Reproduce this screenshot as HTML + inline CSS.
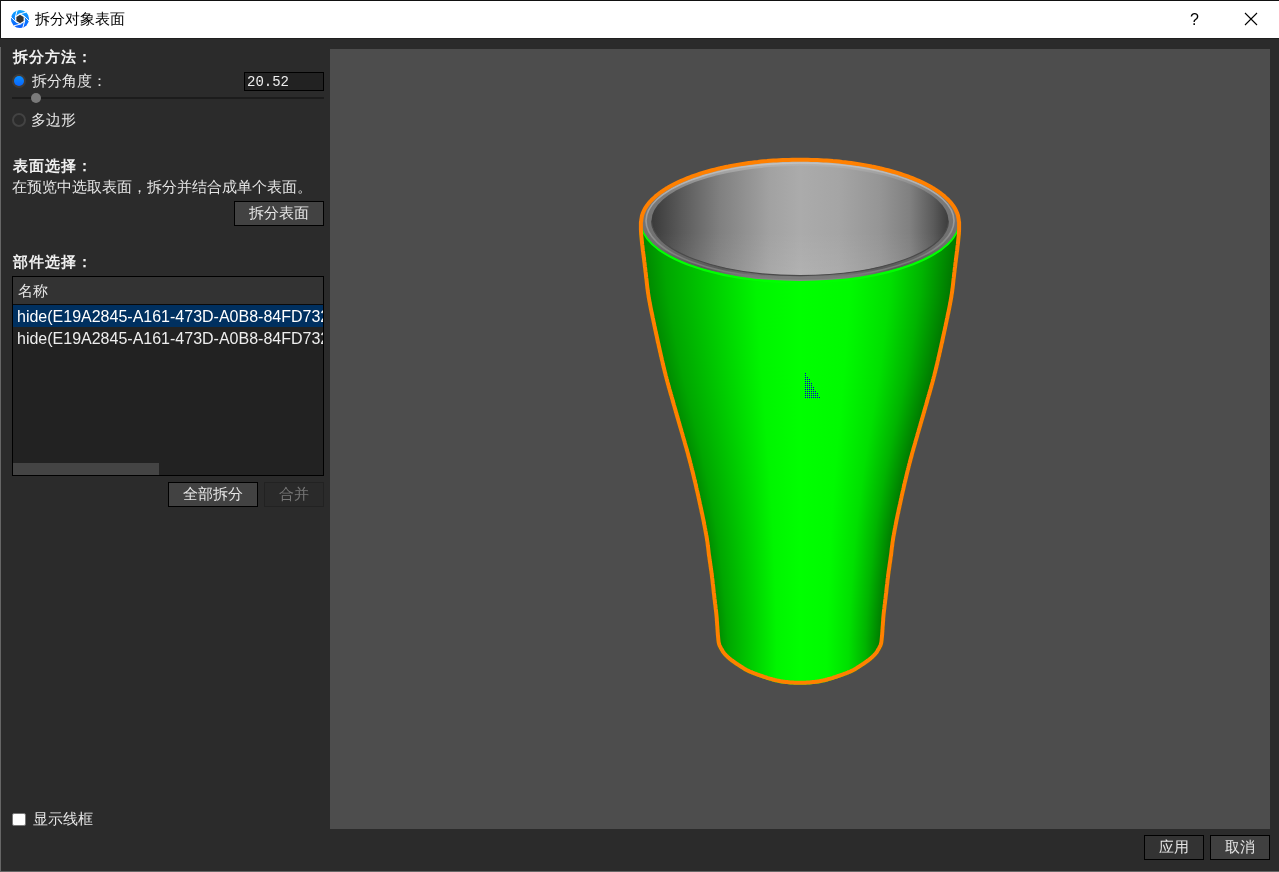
<!DOCTYPE html>
<html><head><meta charset="utf-8">
<style>
*{margin:0;padding:0;box-sizing:border-box}
html,body{width:1279px;height:872px;overflow:hidden;background:#2b2b2b;font-family:"Liberation Sans",sans-serif;color:#e6e6e6}
.a{position:absolute;white-space:nowrap}
.t{font-size:15px;line-height:20px}
.b{font-weight:bold;font-size:15px;letter-spacing:1px}
.btn{position:absolute;border:1px solid #000;background:#424242;color:#e6e6e6;font-size:15px;text-align:center}
</style></head><body>
<div id="root" style="position:absolute;left:0;top:0;width:1279px;height:872px;will-change:transform;background:#2b2b2b">
<!-- title bar -->
<div class="a" style="left:0;top:0;width:1279px;height:38px;background:#fff;border-top:1px solid #111"></div>
<div class="a" style="left:0;top:0;width:1px;height:38px;background:#151515"></div>
<div class="a" style="left:0;top:38px;width:1279px;height:1px;background:#1f1f1f"></div>
<div class="a" style="left:0;top:47px;width:1px;height:825px;background:#666"></div>
<div class="a" style="left:0;top:871px;width:1279px;height:1px;background:#666"></div>
<svg class="a" style="left:10px;top:9px" width="20" height="20" viewBox="0 0 20 20">
<defs><linearGradient id="ic" x1="0" y1="0" x2="0" y2="1"><stop offset="0" stop-color="#10a8ff"/><stop offset="1" stop-color="#0a5cff"/></linearGradient></defs>
<circle cx="10" cy="10" r="9.1" fill="url(#ic)"/>
<circle cx="10" cy="10" r="5.0" fill="#fff"/>
<path d="M14.83 11.29L12.77 18.98 M11.29 14.83L3.61 16.89 M6.46 13.54L0.84 7.91 M5.17 8.71L7.23 1.02 M8.71 5.17L16.39 3.11 M13.54 6.46L19.16 12.09" stroke="#fff" stroke-width="1"/>
<polygon points="13.64,12.10 10.00,14.20 6.36,12.10 6.36,7.90 10.00,5.80 13.64,7.90" fill="#333"/>
</svg>
<div class="a t" style="left:35px;top:9px;color:#000">拆分对象表面</div>
<div class="a" style="left:1190px;top:10px;color:#000;font-size:16px;line-height:20px">?</div>
<svg class="a" style="left:1244px;top:12px" width="14" height="14"><path d="M1 1L13 13M13 1L1 13" stroke="#000" stroke-width="1.1"/></svg>

<!-- left panel -->
<div class="a t b" style="left:13px;top:47px;color:#f0f0f0">拆分方法：</div>
<div class="a" style="left:12px;top:74px;width:14px;height:14px;border-radius:50%;background:#3e3a36"></div>
<div class="a" style="left:14px;top:76px;width:10px;height:10px;border-radius:50%;background:linear-gradient(#0a90ff,#0a64ff)"></div>
<div class="a t" style="left:32px;top:71px">拆分角度：</div>
<div class="a" style="left:244px;top:72px;width:80px;height:19px;border:1px solid #000;background:#222"></div>
<div class="a" style="left:247px;top:74px;font-family:'Liberation Mono',monospace;font-size:14px;line-height:17px;color:#eee">20.52</div>
<div class="a" style="left:12px;top:97px;width:312px;height:2px;background:#1c1c1c"></div>
<div class="a" style="left:31px;top:93px;width:10px;height:10px;border-radius:50%;background:#7a7a7a"></div>
<div class="a" style="left:12px;top:113px;width:14px;height:14px;border-radius:50%;border:2px solid #434343"></div>
<div class="a t" style="left:31px;top:110px">多边形</div>

<div class="a t b" style="left:13px;top:156px;color:#f0f0f0">表面选择：</div>
<div class="a t" style="left:12px;top:177px">在预览中选取表面，拆分并结合成单个表面。</div>
<div class="btn" style="left:234px;top:201px;width:90px;height:25px;line-height:22px">拆分表面</div>

<div class="a t b" style="left:13px;top:252px;color:#f0f0f0">部件选择：</div>
<div class="a" style="left:12px;top:276px;width:312px;height:200px;border:1px solid #000;background:#222;overflow:hidden">
  <div style="position:absolute;left:0;top:0;width:310px;height:28px;background:#333;border-bottom:1px solid #0a0a0a"></div>
  <div class="a t" style="left:5px;top:4px">名称</div>
  <div style="position:absolute;left:0;top:28px;width:310px;height:22px;background:#003060"></div>
  <div class="a" style="left:4px;top:30px;font-size:16px;line-height:20px;color:#fff">hide(E19A2845-A161-473D-A0B8-84FD732E</div>
  <div class="a" style="left:4px;top:52px;font-size:16px;line-height:20px;color:#eee">hide(E19A2845-A161-473D-A0B8-84FD732E</div>
  <div style="position:absolute;left:0;top:186px;width:146px;height:12px;background:#444"></div>
</div>
<div class="btn" style="left:168px;top:482px;width:90px;height:25px;line-height:22px">全部拆分</div>
<div class="btn" style="left:264px;top:482px;width:60px;height:25px;line-height:22px;background:#2a2a2a;border-color:#222;color:#777">合并</div>

<div class="a" style="left:12px;top:813px;width:14px;height:13px;background:#fff;border:1px solid #777;border-radius:2px"></div>
<div class="a t" style="left:33px;top:809px">显示线框</div>

<!-- viewport -->
<div class="a" style="left:330px;top:49px;width:940px;height:780px;background:#4d4d4d"></div>
<svg width="1279" height="872" style="position:absolute;left:0;top:0">
<defs>
<linearGradient id="gg">
<stop offset="0" stop-color="#008400"/><stop offset="0.07" stop-color="#00a600"/><stop offset="0.21" stop-color="#00cc00"/><stop offset="0.36" stop-color="#00f500"/><stop offset="0.5" stop-color="#00ff00"/><stop offset="0.66" stop-color="#00fa00"/><stop offset="0.79" stop-color="#00e000"/><stop offset="0.89" stop-color="#00b400"/><stop offset="1" stop-color="#007000"/>
</linearGradient>
<linearGradient id="ig" gradientUnits="userSpaceOnUse" x1="651.5" y1="0" x2="948.5" y2="0">
<stop offset="0" stop-color="#3a3a3a"/><stop offset="0.1" stop-color="#5a5a5a"/><stop offset="0.23" stop-color="#808080"/><stop offset="0.4" stop-color="#a2a2a2"/><stop offset="0.5" stop-color="#ababab"/><stop offset="0.63" stop-color="#a5a5a5"/><stop offset="0.77" stop-color="#959595"/><stop offset="0.87" stop-color="#808080"/><stop offset="0.95" stop-color="#5a5a5a"/><stop offset="1" stop-color="#3c3c3c"/>
</linearGradient>
<linearGradient id="rg" gradientUnits="userSpaceOnUse" x1="0" y1="160" x2="0" y2="281">
<stop offset="0" stop-color="#b8b8b8"/><stop offset="0.3" stop-color="#7a7a7a"/><stop offset="0.7" stop-color="#6e6e6e"/><stop offset="0.9" stop-color="#5a5a5a"/><stop offset="1" stop-color="#8a8a8a"/>
</linearGradient>
<linearGradient id="hg" gradientUnits="userSpaceOnUse" x1="0" y1="163" x2="0" y2="279">
<stop offset="0" stop-color="#c0c0c0"/><stop offset="0.5" stop-color="#9a9a9a"/><stop offset="0.85" stop-color="#7a7a7a"/><stop offset="1" stop-color="#7a7a7a"/>
</linearGradient>
<linearGradient id="ivg" gradientUnits="userSpaceOnUse" x1="0" y1="166" x2="0" y2="276">
<stop offset="0" stop-color="#000" stop-opacity="0"/><stop offset="0.6" stop-color="#fff" stop-opacity="0"/><stop offset="1" stop-color="#fff" stop-opacity="0.08"/>
</linearGradient>
<clipPath id="bc"><polygon points="638.9,222.0 638.9,223.0 638.9,224.0 638.9,225.0 638.9,226.0 638.9,227.0 638.9,228.0 638.9,229.0 638.9,230.0 639.0,231.0 639.0,232.0 639.1,233.0 639.1,234.0 639.2,235.0 639.3,236.0 639.4,237.0 639.5,238.0 639.6,239.0 639.7,240.0 639.8,241.0 639.9,242.0 640.0,243.0 640.1,244.0 640.3,245.0 640.4,246.0 640.5,247.0 640.6,248.0 640.7,249.0 640.8,250.0 641.0,251.0 641.1,252.0 641.2,253.0 641.3,254.0 641.5,255.0 641.6,256.0 641.7,257.0 641.8,258.0 642.0,259.0 642.1,260.0 642.2,261.0 642.4,262.0 642.5,263.0 642.6,264.0 642.7,265.0 642.8,266.0 643.0,267.0 643.1,268.0 643.2,269.0 643.3,270.0 643.4,271.0 643.5,272.0 643.7,273.0 643.8,274.0 643.9,275.0 644.0,276.0 644.1,277.0 644.3,278.0 644.4,279.0 644.5,280.0 644.6,281.0 644.7,282.0 644.8,282.9 644.9,283.8 645.0,284.8 645.1,285.7 645.2,286.6 645.3,287.6 645.5,288.5 645.6,289.5 645.7,290.5 645.8,291.5 646.0,292.6 646.1,293.7 646.3,294.8 646.5,296.0 646.6,296.8 646.8,297.6 646.9,298.4 647.1,299.3 647.2,300.1 647.4,301.0 647.5,301.9 647.7,302.9 647.9,303.8 648.1,304.7 648.3,305.7 648.5,306.7 648.6,307.7 648.8,308.7 649.0,309.7 649.3,310.7 649.5,311.8 649.7,312.8 649.9,313.8 650.1,314.9 650.3,315.9 650.5,317.0 650.8,318.1 651.0,319.2 651.2,320.2 651.4,321.3 651.7,322.4 651.9,323.4 652.1,324.5 652.4,325.6 652.6,326.7 652.8,327.7 653.0,328.8 653.3,329.8 653.5,330.9 653.7,331.9 653.9,333.0 654.2,334.0 654.4,335.0 654.6,336.0 654.8,337.0 655.0,338.0 655.2,338.9 655.5,339.9 655.7,340.9 655.9,341.9 656.1,342.9 656.3,343.9 656.5,344.9 656.7,345.8 657.0,346.8 657.2,347.8 657.4,348.8 657.6,349.8 657.8,350.8 658.1,351.8 658.3,352.8 658.5,353.8 658.7,354.7 659.0,355.7 659.2,356.7 659.4,357.7 659.6,358.7 659.9,359.7 660.1,360.6 660.3,361.6 660.5,362.6 660.8,363.6 661.0,364.5 661.2,365.5 661.5,366.5 661.7,367.5 661.9,368.4 662.2,369.4 662.4,370.3 662.6,371.3 662.9,372.2 663.1,373.2 663.3,374.1 663.6,375.1 663.8,376.0 664.1,377.0 664.3,378.0 664.6,379.0 664.8,380.0 665.1,380.9 665.3,381.9 665.6,382.8 665.9,383.8 666.1,384.7 666.4,385.7 666.6,386.6 666.9,387.5 667.1,388.4 667.4,389.4 667.7,390.3 667.9,391.2 668.2,392.1 668.5,393.1 668.7,394.0 669.0,394.9 669.3,395.9 669.5,396.8 669.8,397.7 670.1,398.7 670.4,399.7 670.6,400.7 670.9,401.6 671.2,402.6 671.5,403.6 671.8,404.7 672.1,405.7 672.4,406.8 672.7,407.8 673.0,408.9 673.3,410.0 673.5,410.8 673.8,411.7 674.0,412.5 674.3,413.4 674.5,414.3 674.8,415.1 675.0,416.0 675.3,416.9 675.5,417.8 675.8,418.7 676.0,419.6 676.3,420.5 676.6,421.4 676.8,422.3 677.1,423.3 677.4,424.2 677.6,425.1 677.9,426.1 678.2,427.0 678.5,428.0 678.8,428.9 679.0,429.9 679.3,430.9 679.6,431.8 679.9,432.8 680.2,433.8 680.4,434.8 680.7,435.8 681.0,436.7 681.3,437.7 681.6,438.7 681.9,439.7 682.2,440.7 682.5,441.7 682.7,442.7 683.0,443.7 683.3,444.7 683.6,445.8 683.9,446.8 684.2,447.8 684.5,448.8 684.7,449.8 685.0,450.8 685.3,451.8 685.6,452.8 685.9,453.9 686.1,454.9 686.4,455.9 686.7,456.9 687.0,457.9 687.2,458.9 687.5,459.9 687.8,461.0 688.0,462.0 688.3,463.0 688.6,464.0 688.8,465.0 689.1,466.0 689.3,467.0 689.6,468.0 689.9,469.0 690.1,470.0 690.3,471.0 690.6,471.9 690.8,472.9 691.1,473.9 691.3,474.9 691.5,475.9 691.8,476.9 692.0,478.0 692.3,479.0 692.5,480.0 692.8,481.1 693.0,482.1 693.3,483.2 693.5,484.2 693.8,485.3 694.0,486.3 694.2,487.4 694.5,488.5 694.7,489.5 695.0,490.6 695.2,491.7 695.5,492.8 695.7,493.9 696.0,494.9 696.2,496.0 696.4,497.1 696.7,498.2 696.9,499.3 697.2,500.3 697.4,501.4 697.6,502.5 697.9,503.6 698.1,504.6 698.3,505.7 698.6,506.7 698.8,507.8 699.0,508.8 699.2,509.9 699.4,510.9 699.7,512.0 699.9,513.0 700.1,514.0 700.3,515.0 700.5,516.0 700.7,517.0 700.9,518.0 701.1,519.0 701.3,519.9 701.5,520.9 701.7,521.9 701.9,522.8 702.1,523.7 702.3,524.6 702.4,525.5 702.6,526.4 702.8,527.3 703.0,528.2 703.1,529.0 703.3,529.9 703.4,530.7 703.6,531.5 703.7,532.3 703.9,533.1 704.0,533.8 704.1,534.6 704.3,535.3 704.4,536.0 704.6,537.3 704.8,538.5 705.0,539.6 705.2,540.7 705.3,541.8 705.5,542.8 705.6,543.8 705.7,544.8 705.9,545.8 706.0,546.7 706.1,547.6 706.2,548.5 706.3,549.5 706.4,550.4 706.5,551.3 706.6,552.2 706.7,553.1 706.8,554.1 707.0,555.0 707.1,556.0 707.2,557.0 707.4,558.0 707.5,559.0 707.7,560.0 707.8,561.0 707.9,562.0 708.1,563.0 708.2,564.0 708.4,565.0 708.5,566.0 708.7,567.0 708.8,568.0 709.0,569.0 709.1,570.0 709.2,571.0 709.4,572.0 709.5,573.0 709.6,574.0 709.8,575.0 709.9,576.0 710.0,577.0 710.2,578.0 710.3,579.0 710.4,580.0 710.5,581.0 710.6,582.0 710.7,583.0 710.9,584.0 711.0,585.0 711.1,586.0 711.2,587.0 711.3,588.0 711.4,589.0 711.5,590.0 711.6,591.0 711.7,592.0 711.9,593.0 712.0,594.0 712.1,595.0 712.2,596.0 712.3,597.0 712.4,598.0 712.6,599.0 712.7,600.0 712.8,601.0 712.9,602.0 713.0,603.0 713.2,604.0 713.3,605.0 713.4,606.0 713.5,607.0 713.6,608.0 713.8,609.0 713.9,610.0 714.0,611.0 714.1,612.0 714.2,613.0 714.3,614.0 714.4,615.0 714.5,616.0 714.6,617.0 714.7,618.0 714.8,619.1 714.8,620.1 714.9,621.2 715.0,622.3 715.1,623.4 715.2,624.4 715.2,625.5 715.3,626.6 715.4,627.6 715.4,628.6 715.5,629.7 715.6,630.7 715.6,631.6 715.7,632.6 715.8,633.5 715.8,634.4 715.9,635.2 716.0,636.0 716.1,637.2 716.2,638.3 716.3,639.4 716.4,640.4 716.5,641.4 716.7,642.3 716.8,643.2 717.0,644.0 717.3,645.1 717.7,646.1 718.1,647.0 718.6,648.0 719.0,648.9 719.5,649.8 720.1,650.7 720.6,651.7 721.3,652.7 721.9,653.6 722.6,654.5 723.3,655.3 724.0,656.1 724.7,656.8 725.5,657.6 726.3,658.3 727.1,659.1 727.9,659.8 728.8,660.5 729.6,661.1 730.4,661.7 731.2,662.4 732.0,663.0 732.8,663.6 733.7,664.2 734.6,664.7 735.4,665.3 736.3,665.9 737.2,666.5 738.1,667.1 738.9,667.6 739.8,668.2 740.6,668.7 741.5,669.3 742.4,669.9 743.3,670.4 744.2,670.9 745.2,671.5 746.2,672.0 747.2,672.5 748.0,672.9 748.9,673.3 749.8,673.7 750.7,674.1 751.7,674.5 752.7,674.9 753.6,675.2 754.6,675.6 755.6,676.0 756.6,676.3 757.6,676.7 758.6,677.1 759.6,677.4 760.6,677.7 761.6,678.1 762.6,678.4 763.5,678.7 764.5,679.0 765.5,679.3 766.5,679.7 767.4,680.0 768.4,680.3 769.4,680.6 770.4,680.9 771.3,681.1 772.3,681.4 773.3,681.7 774.2,681.9 775.2,682.2 776.1,682.4 777.1,682.6 778.0,682.8 779.0,683.0 780.1,683.2 781.1,683.4 782.1,683.5 783.1,683.7 784.1,683.8 785.1,683.9 786.1,684.0 787.1,684.1 788.1,684.2 789.0,684.3 790.0,684.4 791.0,684.5 792.1,684.6 793.1,684.6 794.1,684.7 795.1,684.7 796.0,684.7 797.0,684.8 798.0,684.8 799.0,684.8 800.0,684.8 801.0,684.8 802.0,684.8 803.0,684.8 804.0,684.7 804.9,684.7 805.9,684.7 806.9,684.6 807.9,684.6 809.0,684.5 810.0,684.4 811.0,684.3 811.9,684.2 812.9,684.1 813.9,684.0 814.9,683.9 815.9,683.8 816.9,683.7 817.9,683.5 818.9,683.4 819.9,683.2 821.0,683.0 822.0,682.8 822.9,682.6 823.9,682.4 824.8,682.2 825.8,681.9 826.7,681.7 827.7,681.4 828.7,681.1 829.6,680.9 830.6,680.6 831.6,680.3 832.6,680.0 833.5,679.7 834.5,679.3 835.5,679.0 836.5,678.7 837.4,678.4 838.4,678.1 839.4,677.7 840.4,677.4 841.4,677.1 842.4,676.7 843.4,676.3 844.4,676.0 845.4,675.6 846.4,675.2 847.3,674.9 848.3,674.5 849.3,674.1 850.2,673.7 851.1,673.3 852.0,672.9 852.8,672.5 853.8,672.0 854.8,671.5 855.8,670.9 856.7,670.4 857.6,669.9 858.5,669.3 859.4,668.7 860.2,668.2 861.1,667.6 861.9,667.1 862.8,666.5 863.7,665.9 864.6,665.3 865.4,664.7 866.3,664.2 867.2,663.6 868.0,663.0 868.8,662.4 869.6,661.7 870.4,661.1 871.2,660.5 872.1,659.8 872.9,659.1 873.7,658.3 874.5,657.6 875.3,656.8 876.0,656.1 876.7,655.3 877.4,654.5 878.1,653.6 878.7,652.7 879.4,651.7 879.9,650.7 880.5,649.8 881.0,648.9 881.4,648.0 881.9,647.0 882.3,646.1 882.7,645.1 883.0,644.0 883.2,643.2 883.3,642.3 883.5,641.4 883.6,640.4 883.7,639.4 883.8,638.3 883.9,637.2 884.0,636.0 884.1,635.2 884.2,634.4 884.2,633.5 884.3,632.6 884.4,631.6 884.4,630.7 884.5,629.7 884.6,628.6 884.6,627.6 884.7,626.6 884.8,625.5 884.8,624.4 884.9,623.4 885.0,622.3 885.1,621.2 885.2,620.1 885.2,619.1 885.3,618.0 885.4,617.0 885.5,616.0 885.6,615.0 885.7,614.0 885.8,613.0 885.9,612.0 886.0,611.0 886.1,610.0 886.2,609.0 886.4,608.0 886.5,607.0 886.6,606.0 886.7,605.0 886.8,604.0 887.0,603.0 887.1,602.0 887.2,601.0 887.3,600.0 887.4,599.0 887.6,598.0 887.7,597.0 887.8,596.0 887.9,595.0 888.0,594.0 888.1,593.0 888.3,592.0 888.4,591.0 888.5,590.0 888.6,589.0 888.7,588.0 888.8,587.0 888.9,586.0 889.0,585.0 889.1,584.0 889.3,583.0 889.4,582.0 889.5,581.0 889.6,580.0 889.7,579.0 889.8,578.0 890.0,577.0 890.1,576.0 890.2,575.0 890.4,574.0 890.5,573.0 890.6,572.0 890.8,571.0 890.9,570.0 891.0,569.0 891.2,568.0 891.3,567.0 891.5,566.0 891.6,565.0 891.8,564.0 891.9,563.0 892.1,562.0 892.2,561.0 892.3,560.0 892.5,559.0 892.6,558.0 892.8,557.0 892.9,556.0 893.0,555.0 893.2,554.1 893.3,553.1 893.4,552.2 893.5,551.3 893.6,550.4 893.7,549.5 893.8,548.5 893.9,547.6 894.0,546.7 894.1,545.8 894.3,544.8 894.4,543.8 894.5,542.8 894.7,541.8 894.8,540.7 895.0,539.6 895.2,538.5 895.4,537.3 895.6,536.0 895.7,535.3 895.9,534.6 896.0,533.8 896.1,533.1 896.3,532.3 896.4,531.5 896.6,530.7 896.7,529.9 896.9,529.0 897.0,528.2 897.2,527.3 897.4,526.4 897.6,525.5 897.7,524.6 897.9,523.7 898.1,522.8 898.3,521.9 898.5,520.9 898.7,519.9 898.9,519.0 899.1,518.0 899.3,517.0 899.5,516.0 899.7,515.0 899.9,514.0 900.1,513.0 900.3,512.0 900.6,510.9 900.8,509.9 901.0,508.8 901.2,507.8 901.4,506.7 901.7,505.7 901.9,504.6 902.1,503.6 902.4,502.5 902.6,501.4 902.8,500.3 903.1,499.3 903.3,498.2 903.6,497.1 903.8,496.0 904.0,494.9 904.3,493.9 904.5,492.8 904.8,491.7 905.0,490.6 905.3,489.5 905.5,488.5 905.8,487.4 906.0,486.3 906.2,485.3 906.5,484.2 906.7,483.2 907.0,482.1 907.2,481.1 907.5,480.0 907.7,479.0 908.0,478.0 908.2,476.9 908.5,475.9 908.7,474.9 908.9,473.9 909.2,472.9 909.4,471.9 909.7,471.0 909.9,470.0 910.1,469.0 910.4,468.0 910.7,467.0 910.9,466.0 911.2,465.0 911.4,464.0 911.7,463.0 912.0,462.0 912.2,461.0 912.5,459.9 912.8,458.9 913.0,457.9 913.3,456.9 913.6,455.9 913.9,454.9 914.1,453.9 914.4,452.8 914.7,451.8 915.0,450.8 915.3,449.8 915.5,448.8 915.8,447.8 916.1,446.8 916.4,445.8 916.7,444.7 917.0,443.7 917.3,442.7 917.5,441.7 917.8,440.7 918.1,439.7 918.4,438.7 918.7,437.7 919.0,436.7 919.3,435.8 919.6,434.8 919.8,433.8 920.1,432.8 920.4,431.8 920.7,430.9 921.0,429.9 921.2,428.9 921.5,428.0 921.8,427.0 922.1,426.1 922.4,425.1 922.6,424.2 922.9,423.3 923.2,422.3 923.4,421.4 923.7,420.5 924.0,419.6 924.2,418.7 924.5,417.8 924.7,416.9 925.0,416.0 925.2,415.1 925.5,414.3 925.7,413.4 926.0,412.5 926.2,411.7 926.5,410.8 926.7,410.0 927.0,408.9 927.3,407.8 927.6,406.8 927.9,405.7 928.2,404.7 928.5,403.6 928.8,402.6 929.1,401.6 929.4,400.7 929.6,399.7 929.9,398.7 930.2,397.7 930.5,396.8 930.7,395.9 931.0,394.9 931.3,394.0 931.5,393.1 931.8,392.1 932.1,391.2 932.3,390.3 932.6,389.4 932.9,388.4 933.1,387.5 933.4,386.6 933.6,385.7 933.9,384.7 934.1,383.8 934.4,382.8 934.7,381.9 934.9,380.9 935.2,380.0 935.4,379.0 935.7,378.0 935.9,377.0 936.2,376.0 936.4,375.1 936.7,374.1 936.9,373.2 937.1,372.2 937.4,371.3 937.6,370.3 937.8,369.4 938.1,368.4 938.3,367.5 938.5,366.5 938.8,365.5 939.0,364.5 939.2,363.6 939.5,362.6 939.7,361.6 939.9,360.6 940.1,359.7 940.4,358.7 940.6,357.7 940.8,356.7 941.0,355.7 941.3,354.7 941.5,353.8 941.7,352.8 941.9,351.8 942.2,350.8 942.4,349.8 942.6,348.8 942.8,347.8 943.0,346.8 943.3,345.8 943.5,344.9 943.7,343.9 943.9,342.9 944.1,341.9 944.3,340.9 944.5,339.9 944.8,338.9 945.0,338.0 945.2,337.0 945.4,336.0 945.6,335.0 945.8,334.0 946.1,333.0 946.3,331.9 946.5,330.9 946.7,329.8 947.0,328.8 947.2,327.7 947.4,326.7 947.6,325.6 947.9,324.5 948.1,323.4 948.3,322.4 948.6,321.3 948.8,320.2 949.0,319.2 949.2,318.1 949.5,317.0 949.7,315.9 949.9,314.9 950.1,313.8 950.3,312.8 950.5,311.8 950.7,310.7 951.0,309.7 951.2,308.7 951.4,307.7 951.5,306.7 951.7,305.7 951.9,304.7 952.1,303.8 952.3,302.9 952.5,301.9 952.6,301.0 952.8,300.1 952.9,299.3 953.1,298.4 953.2,297.6 953.4,296.8 953.5,296.0 953.7,294.8 953.9,293.7 954.0,292.6 954.2,291.5 954.3,290.5 954.4,289.5 954.5,288.5 954.7,287.6 954.8,286.6 954.9,285.7 955.0,284.8 955.1,283.8 955.2,282.9 955.3,282.0 955.4,281.0 955.5,280.0 955.6,279.0 955.7,278.0 955.9,277.0 956.0,276.0 956.1,275.0 956.2,274.0 956.3,273.0 956.5,272.0 956.6,271.0 956.7,270.0 956.8,269.0 956.9,268.0 957.0,267.0 957.2,266.0 957.3,265.0 957.4,264.0 957.5,263.0 957.6,262.0 957.8,261.0 957.9,260.0 958.0,259.0 958.2,258.0 958.3,257.0 958.4,256.0 958.5,255.0 958.7,254.0 958.8,253.0 958.9,252.0 959.0,251.0 959.2,250.0 959.3,249.0 959.4,248.0 959.5,247.0 959.6,246.0 959.7,245.0 959.9,244.0 960.0,243.0 960.1,242.0 960.2,241.0 960.3,240.0 960.4,239.0 960.5,238.0 960.6,237.0 960.7,236.0 960.8,235.0 960.9,234.0 960.9,233.0 961.0,232.0 961.0,231.0 961.1,230.0 961.1,229.0 961.1,228.0 961.1,227.0 961.1,226.0 961.1,225.0 961.1,224.0 961.1,223.0 961.1,222.0 960.8,220.7 960.7,219.5 960.5,218.2 960.3,216.9 960.0,215.7 959.7,214.4 959.3,213.1 958.8,211.9 958.3,210.6 957.7,209.4 957.0,208.1 956.3,206.9 955.5,205.7 954.7,204.4 953.8,203.2 952.8,202.0 951.8,200.8 950.7,199.6 949.6,198.4 948.4,197.2 947.2,196.1 945.8,194.9 944.5,193.8 943.1,192.6 941.6,191.5 940.0,190.4 938.5,189.3 936.8,188.2 935.1,187.1 933.4,186.1 931.6,185.0 929.7,184.0 927.8,183.0 925.9,182.0 923.9,181.0 921.8,180.0 919.7,179.1 917.6,178.1 915.4,177.2 913.1,176.3 910.9,175.4 908.5,174.6 906.2,173.7 903.8,172.9 901.3,172.1 898.8,171.3 896.3,170.5 893.7,169.8 891.1,169.0 888.5,168.3 885.8,167.6 883.1,167.0 880.4,166.3 877.6,165.7 874.8,165.1 872.0,164.5 869.2,164.0 866.3,163.4 863.4,162.9 860.4,162.4 857.5,161.9 854.5,161.5 851.5,161.1 848.5,160.7 845.4,160.3 842.4,160.0 839.3,159.7 836.2,159.4 833.1,159.1 830.0,158.8 826.9,158.6 823.7,158.4 820.6,158.2 817.4,158.1 814.3,158.0 811.1,157.9 807.9,157.8 804.8,157.7 801.6,157.7 798.4,157.7 795.2,157.7 792.1,157.8 788.9,157.9 785.7,158.0 782.6,158.1 779.4,158.2 776.3,158.4 773.1,158.6 770.0,158.8 766.9,159.1 763.8,159.4 760.7,159.7 757.6,160.0 754.6,160.3 751.5,160.7 748.5,161.1 745.5,161.5 742.5,161.9 739.6,162.4 736.6,162.9 733.7,163.4 730.8,164.0 728.0,164.5 725.2,165.1 722.4,165.7 719.6,166.3 716.9,167.0 714.2,167.6 711.5,168.3 708.9,169.0 706.3,169.8 703.7,170.5 701.2,171.3 698.7,172.1 696.2,172.9 693.8,173.7 691.5,174.6 689.1,175.4 686.9,176.3 684.6,177.2 682.4,178.1 680.3,179.1 678.2,180.0 676.1,181.0 674.1,182.0 672.2,183.0 670.3,184.0 668.4,185.0 666.6,186.1 664.9,187.1 663.2,188.2 661.5,189.3 660.0,190.4 658.4,191.5 656.9,192.6 655.5,193.8 654.2,194.9 652.8,196.1 651.6,197.2 650.4,198.4 649.3,199.6 648.2,200.8 647.2,202.0 646.2,203.2 645.3,204.4 644.5,205.7 643.7,206.9 643.0,208.1 642.3,209.4 641.7,210.6 641.2,211.9 640.7,213.1 640.3,214.4 640.0,215.7 639.7,216.9 639.5,218.2 639.3,219.5 639.2,220.7"/></clipPath>
</defs>
<g clip-path="url(#bc)" fill="url(#gg)"><rect x="638.9" y="222" width="322.2" height="1"/><rect x="638.9" y="223" width="322.2" height="1"/><rect x="638.9" y="224" width="322.2" height="1"/><rect x="638.9" y="225" width="322.2" height="1"/><rect x="638.9" y="226" width="322.2" height="1"/><rect x="638.9" y="227" width="322.2" height="1"/><rect x="638.9" y="228" width="322.2" height="1"/><rect x="638.9" y="229" width="322.2" height="1"/><rect x="638.9" y="230" width="322.1" height="1"/><rect x="639.0" y="231" width="322.0" height="1"/><rect x="639.0" y="232" width="321.9" height="1"/><rect x="639.1" y="233" width="321.8" height="1"/><rect x="639.2" y="234" width="321.7" height="1"/><rect x="639.2" y="235" width="321.5" height="1"/><rect x="639.3" y="236" width="321.4" height="1"/><rect x="639.4" y="237" width="321.2" height="1"/><rect x="639.5" y="238" width="321.0" height="1"/><rect x="639.6" y="239" width="320.8" height="1"/><rect x="639.7" y="240" width="320.5" height="1"/><rect x="639.8" y="241" width="320.3" height="1"/><rect x="640.0" y="242" width="320.1" height="1"/><rect x="640.1" y="243" width="319.8" height="1"/><rect x="640.2" y="244" width="319.6" height="1"/><rect x="640.3" y="245" width="319.4" height="1"/><rect x="640.4" y="246" width="319.1" height="1"/><rect x="640.5" y="247" width="318.9" height="1"/><rect x="640.7" y="248" width="318.7" height="1"/><rect x="640.8" y="249" width="318.5" height="1"/><rect x="640.9" y="250" width="318.2" height="1"/><rect x="641.0" y="251" width="318.0" height="1"/><rect x="641.1" y="252" width="317.7" height="1"/><rect x="641.3" y="253" width="317.5" height="1"/><rect x="641.4" y="254" width="317.2" height="1"/><rect x="641.5" y="255" width="317.0" height="1"/><rect x="641.6" y="256" width="316.7" height="1"/><rect x="641.8" y="257" width="316.4" height="1"/><rect x="641.9" y="258" width="316.2" height="1"/><rect x="642.0" y="259" width="315.9" height="1"/><rect x="642.2" y="260" width="315.7" height="1"/><rect x="642.3" y="261" width="315.4" height="1"/><rect x="642.4" y="262" width="315.2" height="1"/><rect x="642.5" y="263" width="314.9" height="1"/><rect x="642.7" y="264" width="314.7" height="1"/><rect x="642.8" y="265" width="314.4" height="1"/><rect x="642.9" y="266" width="314.2" height="1"/><rect x="643.0" y="267" width="314.0" height="1"/><rect x="643.1" y="268" width="313.7" height="1"/><rect x="643.3" y="269" width="313.5" height="1"/><rect x="643.4" y="270" width="313.3" height="1"/><rect x="643.5" y="271" width="313.0" height="1"/><rect x="643.6" y="272" width="312.8" height="1"/><rect x="643.7" y="273" width="312.5" height="1"/><rect x="643.8" y="274" width="312.3" height="1"/><rect x="644.0" y="275" width="312.1" height="1"/><rect x="644.1" y="276" width="311.8" height="1"/><rect x="644.2" y="277" width="311.6" height="1"/><rect x="644.3" y="278" width="311.4" height="1"/><rect x="644.4" y="279" width="311.1" height="1"/><rect x="644.6" y="280" width="310.9" height="1"/><rect x="644.7" y="281" width="310.6" height="1"/><rect x="644.8" y="282" width="310.4" height="1"/><rect x="644.9" y="283" width="310.2" height="1"/><rect x="645.0" y="284" width="310.0" height="1"/><rect x="645.1" y="285" width="309.8" height="1"/><rect x="645.2" y="286" width="309.5" height="1"/><rect x="645.3" y="287" width="309.3" height="1"/><rect x="645.5" y="288" width="309.1" height="1"/><rect x="645.6" y="289" width="308.9" height="1"/><rect x="645.7" y="290" width="308.6" height="1"/><rect x="645.8" y="291" width="308.3" height="1"/><rect x="646.0" y="292" width="308.1" height="1"/><rect x="646.1" y="293" width="307.8" height="1"/><rect x="646.3" y="294" width="307.5" height="1"/><rect x="646.4" y="295" width="307.2" height="1"/><rect x="646.6" y="296" width="306.8" height="1"/><rect x="646.8" y="297" width="306.5" height="1"/><rect x="646.9" y="298" width="306.2" height="1"/><rect x="647.1" y="299" width="305.8" height="1"/><rect x="647.3" y="300" width="305.4" height="1"/><rect x="647.5" y="301" width="305.1" height="1"/><rect x="647.6" y="302" width="304.7" height="1"/><rect x="647.8" y="303" width="304.3" height="1"/><rect x="648.0" y="304" width="303.9" height="1"/><rect x="648.2" y="305" width="303.6" height="1"/><rect x="648.4" y="306" width="303.2" height="1"/><rect x="648.6" y="307" width="302.8" height="1"/><rect x="648.8" y="308" width="302.4" height="1"/><rect x="649.0" y="309" width="302.0" height="1"/><rect x="649.2" y="310" width="301.6" height="1"/><rect x="649.4" y="311" width="301.2" height="1"/><rect x="649.6" y="312" width="300.8" height="1"/><rect x="649.8" y="313" width="300.4" height="1"/><rect x="650.0" y="314" width="299.9" height="1"/><rect x="650.2" y="315" width="299.5" height="1"/><rect x="650.4" y="316" width="299.1" height="1"/><rect x="650.6" y="317" width="298.7" height="1"/><rect x="650.9" y="318" width="298.3" height="1"/><rect x="651.1" y="319" width="297.9" height="1"/><rect x="651.3" y="320" width="297.4" height="1"/><rect x="651.5" y="321" width="297.0" height="1"/><rect x="651.7" y="322" width="296.6" height="1"/><rect x="651.9" y="323" width="296.2" height="1"/><rect x="652.1" y="324" width="295.7" height="1"/><rect x="652.3" y="325" width="295.3" height="1"/><rect x="652.6" y="326" width="294.9" height="1"/><rect x="652.8" y="327" width="294.5" height="1"/><rect x="653.0" y="328" width="294.0" height="1"/><rect x="653.2" y="329" width="293.6" height="1"/><rect x="653.4" y="330" width="293.2" height="1"/><rect x="653.6" y="331" width="292.7" height="1"/><rect x="653.8" y="332" width="292.3" height="1"/><rect x="654.1" y="333" width="291.9" height="1"/><rect x="654.3" y="334" width="291.4" height="1"/><rect x="654.5" y="335" width="291.0" height="1"/><rect x="654.7" y="336" width="290.6" height="1"/><rect x="654.9" y="337" width="290.2" height="1"/><rect x="655.1" y="338" width="289.7" height="1"/><rect x="655.4" y="339" width="289.3" height="1"/><rect x="655.6" y="340" width="288.8" height="1"/><rect x="655.8" y="341" width="288.4" height="1"/><rect x="656.0" y="342" width="288.0" height="1"/><rect x="656.2" y="343" width="287.5" height="1"/><rect x="656.4" y="344" width="287.1" height="1"/><rect x="656.7" y="345" width="286.7" height="1"/><rect x="656.9" y="346" width="286.2" height="1"/><rect x="657.1" y="347" width="285.8" height="1"/><rect x="657.3" y="348" width="285.3" height="1"/><rect x="657.6" y="349" width="284.9" height="1"/><rect x="657.8" y="350" width="284.4" height="1"/><rect x="658.0" y="351" width="284.0" height="1"/><rect x="658.2" y="352" width="283.6" height="1"/><rect x="658.4" y="353" width="283.1" height="1"/><rect x="658.7" y="354" width="282.7" height="1"/><rect x="658.9" y="355" width="282.2" height="1"/><rect x="659.1" y="356" width="281.7" height="1"/><rect x="659.4" y="357" width="281.3" height="1"/><rect x="659.6" y="358" width="280.8" height="1"/><rect x="659.8" y="359" width="280.4" height="1"/><rect x="660.0" y="360" width="279.9" height="1"/><rect x="660.3" y="361" width="279.4" height="1"/><rect x="660.5" y="362" width="279.0" height="1"/><rect x="660.7" y="363" width="278.5" height="1"/><rect x="661.0" y="364" width="278.0" height="1"/><rect x="661.2" y="365" width="277.6" height="1"/><rect x="661.5" y="366" width="277.1" height="1"/><rect x="661.7" y="367" width="276.6" height="1"/><rect x="661.9" y="368" width="276.1" height="1"/><rect x="662.2" y="369" width="275.6" height="1"/><rect x="662.4" y="370" width="275.1" height="1"/><rect x="662.7" y="371" width="274.7" height="1"/><rect x="662.9" y="372" width="274.2" height="1"/><rect x="663.2" y="373" width="273.7" height="1"/><rect x="663.4" y="374" width="273.2" height="1"/><rect x="663.7" y="375" width="272.7" height="1"/><rect x="663.9" y="376" width="272.1" height="1"/><rect x="664.2" y="377" width="271.6" height="1"/><rect x="664.4" y="378" width="271.1" height="1"/><rect x="664.7" y="379" width="270.6" height="1"/><rect x="665.0" y="380" width="270.1" height="1"/><rect x="665.2" y="381" width="269.5" height="1"/><rect x="665.5" y="382" width="269.0" height="1"/><rect x="665.8" y="383" width="268.4" height="1"/><rect x="666.1" y="384" width="267.9" height="1"/><rect x="666.3" y="385" width="267.3" height="1"/><rect x="666.6" y="386" width="266.8" height="1"/><rect x="666.9" y="387" width="266.2" height="1"/><rect x="667.2" y="388" width="265.7" height="1"/><rect x="667.4" y="389" width="265.1" height="1"/><rect x="667.7" y="390" width="264.5" height="1"/><rect x="668.0" y="391" width="264.0" height="1"/><rect x="668.3" y="392" width="263.4" height="1"/><rect x="668.6" y="393" width="262.8" height="1"/><rect x="668.9" y="394" width="262.3" height="1"/><rect x="669.2" y="395" width="261.7" height="1"/><rect x="669.4" y="396" width="261.1" height="1"/><rect x="669.7" y="397" width="260.5" height="1"/><rect x="670.0" y="398" width="260.0" height="1"/><rect x="670.3" y="399" width="259.4" height="1"/><rect x="670.6" y="400" width="258.8" height="1"/><rect x="670.9" y="401" width="258.2" height="1"/><rect x="671.2" y="402" width="257.7" height="1"/><rect x="671.5" y="403" width="257.1" height="1"/><rect x="671.7" y="404" width="256.5" height="1"/><rect x="672.0" y="405" width="255.9" height="1"/><rect x="672.3" y="406" width="255.4" height="1"/><rect x="672.6" y="407" width="254.8" height="1"/><rect x="672.9" y="408" width="254.2" height="1"/><rect x="673.2" y="409" width="253.7" height="1"/><rect x="673.4" y="410" width="253.1" height="1"/><rect x="673.7" y="411" width="252.6" height="1"/><rect x="674.0" y="412" width="252.0" height="1"/><rect x="674.3" y="413" width="251.4" height="1"/><rect x="674.6" y="414" width="250.9" height="1"/><rect x="674.9" y="415" width="250.3" height="1"/><rect x="675.1" y="416" width="249.7" height="1"/><rect x="675.4" y="417" width="249.1" height="1"/><rect x="675.7" y="418" width="248.6" height="1"/><rect x="676.0" y="419" width="248.0" height="1"/><rect x="676.3" y="420" width="247.4" height="1"/><rect x="676.6" y="421" width="246.8" height="1"/><rect x="676.9" y="422" width="246.2" height="1"/><rect x="677.2" y="423" width="245.7" height="1"/><rect x="677.5" y="424" width="245.1" height="1"/><rect x="677.7" y="425" width="244.5" height="1"/><rect x="678.0" y="426" width="243.9" height="1"/><rect x="678.3" y="427" width="243.3" height="1"/><rect x="678.6" y="428" width="242.8" height="1"/><rect x="678.9" y="429" width="242.2" height="1"/><rect x="679.2" y="430" width="241.6" height="1"/><rect x="679.5" y="431" width="241.0" height="1"/><rect x="679.8" y="432" width="240.4" height="1"/><rect x="680.1" y="433" width="239.8" height="1"/><rect x="680.4" y="434" width="239.3" height="1"/><rect x="680.7" y="435" width="238.7" height="1"/><rect x="680.9" y="436" width="238.1" height="1"/><rect x="681.2" y="437" width="237.5" height="1"/><rect x="681.5" y="438" width="237.0" height="1"/><rect x="681.8" y="439" width="236.4" height="1"/><rect x="682.1" y="440" width="235.8" height="1"/><rect x="682.4" y="441" width="235.2" height="1"/><rect x="682.7" y="442" width="234.7" height="1"/><rect x="683.0" y="443" width="234.1" height="1"/><rect x="683.2" y="444" width="233.5" height="1"/><rect x="683.5" y="445" width="233.0" height="1"/><rect x="683.8" y="446" width="232.4" height="1"/><rect x="684.1" y="447" width="231.8" height="1"/><rect x="684.4" y="448" width="231.3" height="1"/><rect x="684.7" y="449" width="230.7" height="1"/><rect x="684.9" y="450" width="230.1" height="1"/><rect x="685.2" y="451" width="229.6" height="1"/><rect x="685.5" y="452" width="229.0" height="1"/><rect x="685.8" y="453" width="228.5" height="1"/><rect x="686.0" y="454" width="227.9" height="1"/><rect x="686.3" y="455" width="227.4" height="1"/><rect x="686.6" y="456" width="226.8" height="1"/><rect x="686.9" y="457" width="226.3" height="1"/><rect x="687.1" y="458" width="225.8" height="1"/><rect x="687.4" y="459" width="225.2" height="1"/><rect x="687.7" y="460" width="224.7" height="1"/><rect x="687.9" y="461" width="224.2" height="1"/><rect x="688.2" y="462" width="223.6" height="1"/><rect x="688.4" y="463" width="223.1" height="1"/><rect x="688.7" y="464" width="222.6" height="1"/><rect x="689.0" y="465" width="222.1" height="1"/><rect x="689.2" y="466" width="221.6" height="1"/><rect x="689.5" y="467" width="221.1" height="1"/><rect x="689.7" y="468" width="220.5" height="1"/><rect x="690.0" y="469" width="220.0" height="1"/><rect x="690.2" y="470" width="219.6" height="1"/><rect x="690.5" y="471" width="219.1" height="1"/><rect x="690.7" y="472" width="218.6" height="1"/><rect x="691.0" y="473" width="218.1" height="1"/><rect x="691.2" y="474" width="217.6" height="1"/><rect x="691.4" y="475" width="217.1" height="1"/><rect x="691.7" y="476" width="216.6" height="1"/><rect x="691.9" y="477" width="216.1" height="1"/><rect x="692.2" y="478" width="215.7" height="1"/><rect x="692.4" y="479" width="215.2" height="1"/><rect x="692.6" y="480" width="214.7" height="1"/><rect x="692.9" y="481" width="214.3" height="1"/><rect x="693.1" y="482" width="213.8" height="1"/><rect x="693.3" y="483" width="213.3" height="1"/><rect x="693.6" y="484" width="212.8" height="1"/><rect x="693.8" y="485" width="212.4" height="1"/><rect x="694.0" y="486" width="211.9" height="1"/><rect x="694.3" y="487" width="211.5" height="1"/><rect x="694.5" y="488" width="211.0" height="1"/><rect x="694.7" y="489" width="210.5" height="1"/><rect x="695.0" y="490" width="210.1" height="1"/><rect x="695.2" y="491" width="209.6" height="1"/><rect x="695.4" y="492" width="209.2" height="1"/><rect x="695.6" y="493" width="208.7" height="1"/><rect x="695.9" y="494" width="208.3" height="1"/><rect x="696.1" y="495" width="207.8" height="1"/><rect x="696.3" y="496" width="207.4" height="1"/><rect x="696.5" y="497" width="206.9" height="1"/><rect x="696.8" y="498" width="206.5" height="1"/><rect x="697.0" y="499" width="206.1" height="1"/><rect x="697.2" y="500" width="205.6" height="1"/><rect x="697.4" y="501" width="205.2" height="1"/><rect x="697.6" y="502" width="204.7" height="1"/><rect x="697.9" y="503" width="204.3" height="1"/><rect x="698.1" y="504" width="203.9" height="1"/><rect x="698.3" y="505" width="203.4" height="1"/><rect x="698.5" y="506" width="203.0" height="1"/><rect x="698.7" y="507" width="202.6" height="1"/><rect x="698.9" y="508" width="202.1" height="1"/><rect x="699.1" y="509" width="201.7" height="1"/><rect x="699.4" y="510" width="201.3" height="1"/><rect x="699.6" y="511" width="200.9" height="1"/><rect x="699.8" y="512" width="200.4" height="1"/><rect x="700.0" y="513" width="200.0" height="1"/><rect x="700.2" y="514" width="199.6" height="1"/><rect x="700.4" y="515" width="199.2" height="1"/><rect x="700.6" y="516" width="198.8" height="1"/><rect x="700.8" y="517" width="198.4" height="1"/><rect x="701.0" y="518" width="198.0" height="1"/><rect x="701.2" y="519" width="197.5" height="1"/><rect x="701.4" y="520" width="197.1" height="1"/><rect x="701.6" y="521" width="196.7" height="1"/><rect x="701.8" y="522" width="196.3" height="1"/><rect x="702.0" y="523" width="195.9" height="1"/><rect x="702.2" y="524" width="195.5" height="1"/><rect x="702.4" y="525" width="195.1" height="1"/><rect x="702.6" y="526" width="194.7" height="1"/><rect x="702.8" y="527" width="194.4" height="1"/><rect x="703.0" y="528" width="194.0" height="1"/><rect x="703.2" y="529" width="193.6" height="1"/><rect x="703.4" y="530" width="193.2" height="1"/><rect x="703.6" y="531" width="192.8" height="1"/><rect x="703.8" y="532" width="192.5" height="1"/><rect x="704.0" y="533" width="192.1" height="1"/><rect x="704.1" y="534" width="191.7" height="1"/><rect x="704.3" y="535" width="191.4" height="1"/><rect x="704.5" y="536" width="191.0" height="1"/><rect x="704.7" y="537" width="190.7" height="1"/><rect x="704.8" y="538" width="190.4" height="1"/><rect x="705.0" y="539" width="190.0" height="1"/><rect x="705.1" y="540" width="189.7" height="1"/><rect x="705.3" y="541" width="189.4" height="1"/><rect x="705.4" y="542" width="189.1" height="1"/><rect x="705.6" y="543" width="188.9" height="1"/><rect x="705.7" y="544" width="188.6" height="1"/><rect x="705.8" y="545" width="188.4" height="1"/><rect x="705.9" y="546" width="188.1" height="1"/><rect x="706.1" y="547" width="187.9" height="1"/><rect x="706.2" y="548" width="187.6" height="1"/><rect x="706.3" y="549" width="187.4" height="1"/><rect x="706.4" y="550" width="187.2" height="1"/><rect x="706.5" y="551" width="186.9" height="1"/><rect x="706.7" y="552" width="186.7" height="1"/><rect x="706.8" y="553" width="186.5" height="1"/><rect x="706.9" y="554" width="186.2" height="1"/><rect x="707.0" y="555" width="185.9" height="1"/><rect x="707.2" y="556" width="185.7" height="1"/><rect x="707.3" y="557" width="185.4" height="1"/><rect x="707.4" y="558" width="185.1" height="1"/><rect x="707.6" y="559" width="184.8" height="1"/><rect x="707.7" y="560" width="184.5" height="1"/><rect x="707.9" y="561" width="184.2" height="1"/><rect x="708.0" y="562" width="184.0" height="1"/><rect x="708.2" y="563" width="183.7" height="1"/><rect x="708.3" y="564" width="183.4" height="1"/><rect x="708.5" y="565" width="183.1" height="1"/><rect x="708.6" y="566" width="182.8" height="1"/><rect x="708.7" y="567" width="182.5" height="1"/><rect x="708.9" y="568" width="182.2" height="1"/><rect x="709.0" y="569" width="182.0" height="1"/><rect x="709.2" y="570" width="181.7" height="1"/><rect x="709.3" y="571" width="181.4" height="1"/><rect x="709.4" y="572" width="181.1" height="1"/><rect x="709.6" y="573" width="180.9" height="1"/><rect x="709.7" y="574" width="180.6" height="1"/><rect x="709.8" y="575" width="180.3" height="1"/><rect x="710.0" y="576" width="180.1" height="1"/><rect x="710.1" y="577" width="179.8" height="1"/><rect x="710.2" y="578" width="179.6" height="1"/><rect x="710.3" y="579" width="179.3" height="1"/><rect x="710.5" y="580" width="179.1" height="1"/><rect x="710.6" y="581" width="178.9" height="1"/><rect x="710.7" y="582" width="178.6" height="1"/><rect x="710.8" y="583" width="178.4" height="1"/><rect x="710.9" y="584" width="178.2" height="1"/><rect x="711.0" y="585" width="177.9" height="1"/><rect x="711.1" y="586" width="177.7" height="1"/><rect x="711.2" y="587" width="177.5" height="1"/><rect x="711.4" y="588" width="177.3" height="1"/><rect x="711.5" y="589" width="177.1" height="1"/><rect x="711.6" y="590" width="176.8" height="1"/><rect x="711.7" y="591" width="176.6" height="1"/><rect x="711.8" y="592" width="176.4" height="1"/><rect x="711.9" y="593" width="176.2" height="1"/><rect x="712.0" y="594" width="175.9" height="1"/><rect x="712.1" y="595" width="175.7" height="1"/><rect x="712.3" y="596" width="175.5" height="1"/><rect x="712.4" y="597" width="175.3" height="1"/><rect x="712.5" y="598" width="175.0" height="1"/><rect x="712.6" y="599" width="174.8" height="1"/><rect x="712.7" y="600" width="174.5" height="1"/><rect x="712.9" y="601" width="174.3" height="1"/><rect x="713.0" y="602" width="174.0" height="1"/><rect x="713.1" y="603" width="173.8" height="1"/><rect x="713.2" y="604" width="173.6" height="1"/><rect x="713.3" y="605" width="173.3" height="1"/><rect x="713.5" y="606" width="173.1" height="1"/><rect x="713.6" y="607" width="172.8" height="1"/><rect x="713.7" y="608" width="172.6" height="1"/><rect x="713.8" y="609" width="172.4" height="1"/><rect x="713.9" y="610" width="172.1" height="1"/><rect x="714.0" y="611" width="171.9" height="1"/><rect x="714.1" y="612" width="171.7" height="1"/><rect x="714.3" y="613" width="171.5" height="1"/><rect x="714.4" y="614" width="171.3" height="1"/><rect x="714.5" y="615" width="171.1" height="1"/><rect x="714.5" y="616" width="170.9" height="1"/><rect x="714.6" y="617" width="170.7" height="1"/><rect x="714.7" y="618" width="170.6" height="1"/><rect x="714.8" y="619" width="170.4" height="1"/><rect x="714.9" y="620" width="170.2" height="1"/><rect x="714.9" y="621" width="170.1" height="1"/><rect x="715.0" y="622" width="170.0" height="1"/><rect x="715.1" y="623" width="169.8" height="1"/><rect x="715.2" y="624" width="169.7" height="1"/><rect x="715.2" y="625" width="169.6" height="1"/><rect x="715.3" y="626" width="169.4" height="1"/><rect x="715.4" y="627" width="169.3" height="1"/><rect x="715.4" y="628" width="169.2" height="1"/><rect x="715.5" y="629" width="169.0" height="1"/><rect x="715.6" y="630" width="168.9" height="1"/><rect x="715.6" y="631" width="168.7" height="1"/><rect x="715.7" y="632" width="168.6" height="1"/><rect x="715.8" y="633" width="168.4" height="1"/><rect x="715.9" y="634" width="168.3" height="1"/><rect x="716.0" y="635" width="168.1" height="1"/><rect x="716.0" y="636" width="167.9" height="1"/><rect x="716.1" y="637" width="167.7" height="1"/><rect x="716.2" y="638" width="167.5" height="1"/><rect x="716.3" y="639" width="167.4" height="1"/><rect x="716.4" y="640" width="167.3" height="1"/><rect x="716.4" y="641" width="167.3" height="1"/><rect x="716.4" y="642" width="167.3" height="1"/><rect x="716.4" y="643" width="167.3" height="1"/><rect x="716.4" y="644" width="167.3" height="1"/><rect x="716.4" y="645" width="167.3" height="1"/><rect x="716.4" y="646" width="167.3" height="1"/><rect x="716.4" y="647" width="167.3" height="1"/><rect x="716.4" y="648" width="167.3" height="1"/><rect x="716.4" y="649" width="167.3" height="1"/><rect x="716.4" y="650" width="167.3" height="1"/><rect x="716.4" y="651" width="167.3" height="1"/><rect x="716.4" y="652" width="167.3" height="1"/><rect x="716.4" y="653" width="167.3" height="1"/><rect x="716.4" y="654" width="167.3" height="1"/><rect x="716.4" y="655" width="167.3" height="1"/><rect x="716.4" y="656" width="167.3" height="1"/><rect x="716.4" y="657" width="167.3" height="1"/><rect x="716.4" y="658" width="167.3" height="1"/><rect x="716.4" y="659" width="167.3" height="1"/><rect x="716.4" y="660" width="167.3" height="1"/><rect x="716.4" y="661" width="167.3" height="1"/><rect x="716.4" y="662" width="167.3" height="1"/><rect x="716.4" y="663" width="167.3" height="1"/><rect x="716.4" y="664" width="167.3" height="1"/><rect x="716.4" y="665" width="167.3" height="1"/><rect x="716.4" y="666" width="167.3" height="1"/><rect x="716.4" y="667" width="167.3" height="1"/><rect x="716.4" y="668" width="167.3" height="1"/><rect x="716.4" y="669" width="167.3" height="1"/><rect x="716.4" y="670" width="167.3" height="1"/><rect x="716.4" y="671" width="167.3" height="1"/><rect x="716.4" y="672" width="167.3" height="1"/><rect x="716.4" y="673" width="167.3" height="1"/><rect x="716.4" y="674" width="167.3" height="1"/><rect x="716.4" y="675" width="167.3" height="1"/><rect x="716.4" y="676" width="167.3" height="1"/><rect x="716.4" y="677" width="167.3" height="1"/><rect x="716.4" y="678" width="167.3" height="1"/><rect x="716.4" y="679" width="167.3" height="1"/><rect x="716.4" y="680" width="167.3" height="1"/><rect x="716.4" y="681" width="167.3" height="1"/><rect x="716.4" y="682" width="167.3" height="1"/><rect x="716.4" y="683" width="167.3" height="1"/><rect x="716.4" y="684" width="167.3" height="1"/></g>
<path d="M641,221.5 A159,60.5 0 0 0 959,221.5" fill="none" stroke="#00ff00" stroke-width="2.5" clip-path="url(#bc)"/>
<ellipse cx="800" cy="220.5" rx="159" ry="60.5" fill="url(#rg)"/>
<ellipse cx="800" cy="220.8" rx="154" ry="57.8" fill="none" stroke="url(#hg)" stroke-width="1.6"/>
<ellipse cx="800" cy="220.8" rx="148.5" ry="54.8" fill="url(#ig)"/>
<ellipse cx="800" cy="220.8" rx="148.5" ry="54.8" fill="url(#ivg)"/>
<path d="M651.5,220.8 A148.5,54.8 0 0 0 948.5,220.8" fill="none" stroke="#4a4a4a" stroke-width="1.2"/>
<g fill="#0000d0"><rect x="805" y="373" width="1" height="1"/><rect x="805" y="375" width="1" height="1"/><rect x="805" y="377" width="1" height="1"/><rect x="807" y="377" width="1" height="1"/><rect x="805" y="379" width="1" height="1"/><rect x="807" y="379" width="1" height="1"/><rect x="809" y="379" width="1" height="1"/><rect x="805" y="381" width="1" height="1"/><rect x="807" y="381" width="1" height="1"/><rect x="809" y="381" width="1" height="1"/><rect x="805" y="383" width="1" height="1"/><rect x="807" y="383" width="1" height="1"/><rect x="809" y="383" width="1" height="1"/><rect x="811" y="383" width="1" height="1"/><rect x="805" y="385" width="1" height="1"/><rect x="807" y="385" width="1" height="1"/><rect x="809" y="385" width="1" height="1"/><rect x="811" y="385" width="1" height="1"/><rect x="805" y="387" width="1" height="1"/><rect x="807" y="387" width="1" height="1"/><rect x="809" y="387" width="1" height="1"/><rect x="811" y="387" width="1" height="1"/><rect x="813" y="387" width="1" height="1"/><rect x="805" y="389" width="1" height="1"/><rect x="807" y="389" width="1" height="1"/><rect x="809" y="389" width="1" height="1"/><rect x="811" y="389" width="1" height="1"/><rect x="813" y="389" width="1" height="1"/><rect x="805" y="391" width="1" height="1"/><rect x="807" y="391" width="1" height="1"/><rect x="809" y="391" width="1" height="1"/><rect x="811" y="391" width="1" height="1"/><rect x="813" y="391" width="1" height="1"/><rect x="815" y="391" width="1" height="1"/><rect x="805" y="393" width="1" height="1"/><rect x="807" y="393" width="1" height="1"/><rect x="809" y="393" width="1" height="1"/><rect x="811" y="393" width="1" height="1"/><rect x="813" y="393" width="1" height="1"/><rect x="815" y="393" width="1" height="1"/><rect x="817" y="393" width="1" height="1"/><rect x="805" y="395" width="1" height="1"/><rect x="807" y="395" width="1" height="1"/><rect x="809" y="395" width="1" height="1"/><rect x="811" y="395" width="1" height="1"/><rect x="813" y="395" width="1" height="1"/><rect x="815" y="395" width="1" height="1"/><rect x="817" y="395" width="1" height="1"/><rect x="805" y="397" width="1" height="1"/><rect x="807" y="397" width="1" height="1"/><rect x="809" y="397" width="1" height="1"/><rect x="811" y="397" width="1" height="1"/><rect x="813" y="397" width="1" height="1"/><rect x="815" y="397" width="1" height="1"/><rect x="817" y="397" width="1" height="1"/><rect x="819" y="397" width="1" height="1"/></g>
<polygon points="640.9,222.3 640.9,223.0 640.9,224.0 640.9,225.0 640.9,226.0 640.9,227.0 640.9,228.0 640.9,229.0 640.9,229.9 641.0,230.9 641.0,231.9 641.1,232.9 641.1,233.9 641.2,234.8 641.3,235.8 641.4,236.8 641.5,237.8 641.6,238.8 641.7,239.8 641.8,240.8 641.9,241.8 642.0,242.8 642.1,243.8 642.2,244.8 642.4,245.8 642.5,246.8 642.6,247.8 642.7,248.8 642.8,249.8 642.9,250.8 643.1,251.8 643.2,252.8 643.3,253.7 643.4,254.7 643.6,255.7 643.7,256.7 643.8,257.7 644.0,258.7 644.1,259.7 644.2,260.7 644.3,261.8 644.5,262.8 644.6,263.8 644.7,264.8 644.8,265.8 644.9,266.8 645.1,267.8 645.2,268.8 645.3,269.8 645.4,270.8 645.5,271.8 645.7,272.8 645.8,273.8 645.9,274.8 646.0,275.8 646.1,276.8 646.2,277.8 646.4,278.8 646.5,279.8 646.6,280.8 646.7,281.7 646.8,282.7 646.9,283.6 647.0,284.5 647.1,285.5 647.2,286.4 647.3,287.3 647.4,288.3 647.6,289.2 647.7,290.2 647.8,291.2 648.0,292.3 648.1,293.4 648.3,294.5 648.5,295.7 648.6,296.5 648.7,297.3 648.9,298.1 649.0,298.9 649.2,299.8 649.3,300.7 649.5,301.6 649.7,302.5 649.9,303.4 650.0,304.4 650.2,305.3 650.4,306.3 650.6,307.3 650.8,308.3 651.0,309.3 651.2,310.3 651.4,311.4 651.6,312.4 651.8,313.4 652.1,314.5 652.3,315.5 652.5,316.6 652.7,317.7 653.0,318.7 653.2,319.8 653.4,320.9 653.6,322.0 653.9,323.0 654.1,324.1 654.3,325.2 654.5,326.2 654.8,327.3 655.0,328.4 655.2,329.4 655.4,330.5 655.7,331.5 655.9,332.5 656.1,333.6 656.3,334.6 656.6,335.6 656.8,336.6 657.0,337.5 657.2,338.5 657.4,339.5 657.6,340.5 657.8,341.5 658.0,342.5 658.3,343.4 658.5,344.4 658.7,345.4 658.9,346.4 659.1,347.4 659.4,348.4 659.6,349.4 659.8,350.4 660.0,351.3 660.2,352.3 660.5,353.3 660.7,354.3 660.9,355.3 661.1,356.3 661.4,357.3 661.6,358.2 661.8,359.2 662.0,360.2 662.3,361.2 662.5,362.1 662.7,363.1 662.9,364.1 663.2,365.1 663.4,366.0 663.6,367.0 663.9,367.9 664.1,368.9 664.3,369.9 664.6,370.8 664.8,371.8 665.0,372.7 665.3,373.6 665.5,374.6 665.7,375.5 666.0,376.5 666.3,377.5 666.5,378.5 666.8,379.5 667.0,380.4 667.3,381.4 667.5,382.3 667.8,383.3 668.0,384.2 668.3,385.1 668.6,386.0 668.8,387.0 669.1,387.9 669.3,388.8 669.6,389.7 669.9,390.7 670.1,391.6 670.4,392.5 670.6,393.4 670.9,394.4 671.2,395.3 671.5,396.2 671.7,397.2 672.0,398.2 672.3,399.1 672.6,400.1 672.8,401.1 673.1,402.1 673.4,403.1 673.7,404.1 674.0,405.2 674.3,406.2 674.6,407.3 674.9,408.4 675.2,409.5 675.5,410.3 675.7,411.1 675.9,412.0 676.2,412.8 676.4,413.7 676.7,414.6 676.9,415.5 677.2,416.3 677.4,417.2 677.7,418.1 678.0,419.0 678.2,419.9 678.5,420.9 678.8,421.8 679.0,422.7 679.3,423.6 679.6,424.6 679.8,425.5 680.1,426.5 680.4,427.4 680.7,428.4 681.0,429.3 681.2,430.3 681.5,431.3 681.8,432.3 682.1,433.2 682.4,434.2 682.7,435.2 682.9,436.2 683.2,437.2 683.5,438.2 683.8,439.2 684.1,440.2 684.4,441.2 684.7,442.2 684.9,443.2 685.2,444.2 685.5,445.2 685.8,446.2 686.1,447.2 686.4,448.2 686.7,449.3 686.9,450.3 687.2,451.3 687.5,452.3 687.8,453.3 688.1,454.3 688.3,455.4 688.6,456.4 688.9,457.4 689.2,458.4 689.4,459.4 689.7,460.4 690.0,461.5 690.2,462.5 690.5,463.5 690.8,464.5 691.0,465.5 691.3,466.5 691.5,467.5 691.8,468.5 692.0,469.5 692.3,470.5 692.5,471.5 692.8,472.4 693.0,473.4 693.2,474.4 693.5,475.4 693.7,476.5 694.0,477.5 694.2,478.5 694.5,479.6 694.7,480.6 695.0,481.6 695.2,482.7 695.5,483.8 695.7,484.8 696.0,485.9 696.2,487.0 696.4,488.0 696.7,489.1 696.9,490.2 697.2,491.3 697.4,492.3 697.7,493.4 697.9,494.5 698.2,495.6 698.4,496.7 698.6,497.7 698.9,498.8 699.1,499.9 699.3,501.0 699.6,502.1 699.8,503.1 700.0,504.2 700.3,505.3 700.5,506.3 700.7,507.4 701.0,508.4 701.2,509.5 701.4,510.5 701.6,511.5 701.8,512.6 702.1,513.6 702.3,514.6 702.5,515.6 702.7,516.6 702.9,517.6 703.1,518.6 703.3,519.5 703.5,520.5 703.7,521.5 703.9,522.4 704.0,523.3 704.2,524.2 704.4,525.2 704.6,526.0 704.7,526.9 704.9,527.8 705.1,528.6 705.2,529.5 705.4,530.3 705.5,531.1 705.7,531.9 705.8,532.7 706.0,533.5 706.1,534.2 706.2,534.9 706.4,535.7 706.6,536.9 706.8,538.1 707.0,539.3 707.1,540.4 707.3,541.5 707.5,542.6 707.6,543.6 707.7,544.6 707.8,545.5 708.0,546.5 708.1,547.4 708.2,548.3 708.3,549.2 708.4,550.1 708.5,551.0 708.6,551.9 708.7,552.9 708.8,553.8 708.9,554.8 709.1,555.7 709.2,556.7 709.4,557.7 709.5,558.7 709.6,559.7 709.8,560.7 709.9,561.7 710.1,562.7 710.2,563.7 710.4,564.7 710.5,565.7 710.6,566.7 710.8,567.7 710.9,568.7 711.1,569.7 711.2,570.7 711.4,571.7 711.5,572.7 711.6,573.7 711.8,574.7 711.9,575.7 712.0,576.8 712.1,577.8 712.3,578.8 712.4,579.8 712.5,580.8 712.6,581.8 712.7,582.8 712.8,583.8 713.0,584.8 713.1,585.8 713.2,586.8 713.3,587.8 713.4,588.8 713.5,589.8 713.6,590.8 713.7,591.8 713.8,592.8 714.0,593.8 714.1,594.8 714.2,595.8 714.3,596.8 714.4,597.8 714.5,598.8 714.7,599.8 714.8,600.8 714.9,601.8 715.0,602.8 715.1,603.8 715.3,604.8 715.4,605.8 715.5,606.8 715.6,607.8 715.7,608.8 715.9,609.8 716.0,610.8 716.1,611.8 716.2,612.8 716.3,613.8 716.4,614.8 716.5,615.8 716.6,616.8 716.7,617.9 716.8,618.9 716.8,620.0 716.9,621.1 717.0,622.1 717.1,623.2 717.1,624.3 717.2,625.4 717.3,626.4 717.4,627.5 717.4,628.5 717.5,629.5 717.6,630.5 717.6,631.5 717.7,632.4 717.8,633.3 717.8,634.2 717.9,635.0 718.0,635.8 718.1,637.0 718.2,638.1 718.3,639.2 718.4,640.2 718.5,641.1 718.6,642.0 718.8,642.8 718.9,643.5 719.2,644.5 719.5,645.3 719.9,646.1 720.4,647.1 720.8,647.9 721.3,648.8 721.8,649.7 722.4,650.6 722.9,651.6 723.5,652.4 724.2,653.3 724.8,654.0 725.4,654.7 726.1,655.4 726.9,656.1 727.6,656.8 728.4,657.6 729.2,658.3 730.1,659.0 730.8,659.6 731.6,660.2 732.4,660.7 733.2,661.3 734.0,661.9 734.8,662.5 735.7,663.1 736.5,663.7 737.4,664.2 738.3,664.8 739.2,665.4 740.0,666.0 740.9,666.5 741.7,667.1 742.6,667.6 743.4,668.1 744.3,668.7 745.2,669.2 746.1,669.7 747.1,670.2 748.1,670.7 748.9,671.1 749.7,671.5 750.6,671.9 751.5,672.2 752.4,672.6 753.4,673.0 754.3,673.4 755.3,673.7 756.3,674.1 757.3,674.5 758.3,674.8 759.3,675.2 760.3,675.5 761.3,675.8 762.2,676.2 763.2,676.5 764.1,676.8 765.1,677.1 766.1,677.4 767.1,677.8 768.0,678.1 769.0,678.4 770.0,678.7 770.9,678.9 771.9,679.2 772.8,679.5 773.8,679.7 774.7,680.0 775.7,680.2 776.6,680.4 777.5,680.6 778.4,680.8 779.4,681.0 780.4,681.2 781.4,681.4 782.4,681.5 783.4,681.7 784.4,681.8 785.4,681.9 786.3,682.0 787.3,682.1 788.3,682.2 789.2,682.3 790.2,682.4 791.2,682.5 792.2,682.6 793.2,682.6 794.2,682.7 795.1,682.7 796.1,682.7 797.1,682.8 798.0,682.8 799.0,682.8 800.0,682.8 801.0,682.8 802.0,682.8 802.9,682.8 803.9,682.7 804.9,682.7 805.8,682.7 806.8,682.6 807.8,682.6 808.8,682.5 809.8,682.4 810.8,682.3 811.7,682.2 812.7,682.1 813.7,682.0 814.6,681.9 815.6,681.8 816.6,681.7 817.6,681.5 818.6,681.4 819.6,681.2 820.6,681.0 821.6,680.8 822.5,680.6 823.4,680.4 824.3,680.2 825.3,680.0 826.2,679.7 827.2,679.5 828.1,679.2 829.1,678.9 830.0,678.7 831.0,678.4 832.0,678.1 832.9,677.8 833.9,677.4 834.9,677.1 835.9,676.8 836.8,676.5 837.8,676.2 838.7,675.8 839.7,675.5 840.7,675.2 841.7,674.8 842.7,674.5 843.7,674.1 844.7,673.7 845.7,673.4 846.6,673.0 847.6,672.6 848.5,672.2 849.4,671.9 850.3,671.5 851.1,671.1 851.9,670.7 852.9,670.2 853.9,669.7 854.8,669.2 855.7,668.7 856.6,668.1 857.4,667.6 858.3,667.1 859.1,666.5 860.0,666.0 860.8,665.4 861.7,664.8 862.6,664.2 863.5,663.7 864.3,663.1 865.2,662.5 866.0,661.9 866.8,661.3 867.6,660.7 868.4,660.2 869.2,659.6 869.9,659.0 870.8,658.3 871.6,657.6 872.4,656.8 873.1,656.1 873.9,655.4 874.6,654.7 875.2,654.0 875.8,653.3 876.5,652.4 877.1,651.6 877.6,650.6 878.2,649.7 878.7,648.8 879.2,647.9 879.6,647.1 880.1,646.1 880.5,645.3 880.8,644.5 881.1,643.5 881.2,642.8 881.4,642.0 881.5,641.1 881.6,640.2 881.7,639.2 881.8,638.1 881.9,637.0 882.0,635.8 882.1,635.0 882.2,634.2 882.2,633.3 882.3,632.4 882.4,631.5 882.4,630.5 882.5,629.5 882.6,628.5 882.6,627.5 882.7,626.4 882.8,625.4 882.9,624.3 882.9,623.2 883.0,622.1 883.1,621.1 883.2,620.0 883.2,618.9 883.3,617.9 883.4,616.8 883.5,615.8 883.6,614.8 883.7,613.8 883.8,612.8 883.9,611.8 884.0,610.8 884.1,609.8 884.3,608.8 884.4,607.8 884.5,606.8 884.6,605.8 884.7,604.8 884.9,603.8 885.0,602.8 885.1,601.8 885.2,600.8 885.3,599.8 885.5,598.8 885.6,597.8 885.7,596.8 885.8,595.8 885.9,594.8 886.0,593.8 886.2,592.8 886.3,591.8 886.4,590.8 886.5,589.8 886.6,588.8 886.7,587.8 886.8,586.8 886.9,585.8 887.0,584.8 887.2,583.8 887.3,582.8 887.4,581.8 887.5,580.8 887.6,579.8 887.7,578.8 887.9,577.8 888.0,576.8 888.1,575.7 888.2,574.7 888.4,573.7 888.5,572.7 888.6,571.7 888.8,570.7 888.9,569.7 889.1,568.7 889.2,567.7 889.4,566.7 889.5,565.7 889.6,564.7 889.8,563.7 889.9,562.7 890.1,561.7 890.2,560.7 890.4,559.7 890.5,558.7 890.6,557.7 890.8,556.7 890.9,555.7 891.1,554.8 891.2,553.8 891.3,552.9 891.4,551.9 891.5,551.0 891.6,550.1 891.7,549.2 891.8,548.3 891.9,547.4 892.0,546.5 892.2,545.5 892.3,544.6 892.4,543.6 892.5,542.6 892.7,541.5 892.9,540.4 893.0,539.3 893.2,538.1 893.4,536.9 893.6,535.7 893.8,534.9 893.9,534.2 894.0,533.5 894.2,532.7 894.3,531.9 894.5,531.1 894.6,530.3 894.8,529.5 894.9,528.6 895.1,527.8 895.3,526.9 895.4,526.0 895.6,525.2 895.8,524.2 896.0,523.3 896.1,522.4 896.3,521.5 896.5,520.5 896.7,519.5 896.9,518.6 897.1,517.6 897.3,516.6 897.5,515.6 897.7,514.6 897.9,513.6 898.2,512.6 898.4,511.5 898.6,510.5 898.8,509.5 899.0,508.4 899.3,507.4 899.5,506.3 899.7,505.3 900.0,504.2 900.2,503.1 900.4,502.1 900.7,501.0 900.9,499.9 901.1,498.8 901.4,497.7 901.6,496.7 901.8,495.6 902.1,494.5 902.3,493.4 902.6,492.3 902.8,491.3 903.1,490.2 903.3,489.1 903.6,488.0 903.8,487.0 904.0,485.9 904.3,484.8 904.5,483.8 904.8,482.7 905.0,481.6 905.3,480.6 905.5,479.6 905.8,478.5 906.0,477.5 906.3,476.5 906.5,475.4 906.8,474.4 907.0,473.4 907.2,472.4 907.5,471.5 907.7,470.5 908.0,469.5 908.2,468.5 908.5,467.5 908.7,466.5 909.0,465.5 909.2,464.5 909.5,463.5 909.8,462.5 910.0,461.5 910.3,460.4 910.6,459.4 910.8,458.4 911.1,457.4 911.4,456.4 911.7,455.4 911.9,454.3 912.2,453.3 912.5,452.3 912.8,451.3 913.1,450.3 913.3,449.3 913.6,448.2 913.9,447.2 914.2,446.2 914.5,445.2 914.8,444.2 915.1,443.2 915.3,442.2 915.6,441.2 915.9,440.2 916.2,439.2 916.5,438.2 916.8,437.2 917.1,436.2 917.3,435.2 917.6,434.2 917.9,433.2 918.2,432.3 918.5,431.3 918.8,430.3 919.0,429.3 919.3,428.4 919.6,427.4 919.9,426.5 920.2,425.5 920.4,424.6 920.7,423.6 921.0,422.7 921.2,421.8 921.5,420.9 921.8,419.9 922.0,419.0 922.3,418.1 922.6,417.2 922.8,416.3 923.1,415.5 923.3,414.6 923.6,413.7 923.8,412.8 924.1,412.0 924.3,411.1 924.5,410.3 924.8,409.5 925.1,408.4 925.4,407.3 925.7,406.2 926.0,405.2 926.3,404.1 926.6,403.1 926.9,402.1 927.2,401.1 927.4,400.1 927.7,399.1 928.0,398.2 928.3,397.2 928.5,396.2 928.8,395.3 929.1,394.4 929.4,393.4 929.6,392.5 929.9,391.6 930.1,390.7 930.4,389.7 930.7,388.8 930.9,387.9 931.2,387.0 931.4,386.0 931.7,385.1 932.0,384.2 932.2,383.3 932.5,382.3 932.7,381.4 933.0,380.4 933.2,379.5 933.5,378.5 933.7,377.5 934.0,376.5 934.3,375.5 934.5,374.6 934.7,373.6 935.0,372.7 935.2,371.8 935.4,370.8 935.7,369.9 935.9,368.9 936.1,367.9 936.4,367.0 936.6,366.0 936.8,365.1 937.1,364.1 937.3,363.1 937.5,362.1 937.7,361.2 938.0,360.2 938.2,359.2 938.4,358.2 938.6,357.3 938.9,356.3 939.1,355.3 939.3,354.3 939.5,353.3 939.8,352.3 940.0,351.3 940.2,350.4 940.4,349.4 940.6,348.4 940.9,347.4 941.1,346.4 941.3,345.4 941.5,344.4 941.7,343.4 942.0,342.5 942.2,341.5 942.4,340.5 942.6,339.5 942.8,338.5 943.0,337.5 943.2,336.6 943.4,335.6 943.7,334.6 943.9,333.6 944.1,332.5 944.3,331.5 944.6,330.5 944.8,329.4 945.0,328.4 945.2,327.3 945.5,326.2 945.7,325.2 945.9,324.1 946.1,323.0 946.4,322.0 946.6,320.9 946.8,319.8 947.0,318.7 947.3,317.7 947.5,316.6 947.7,315.5 947.9,314.5 948.2,313.4 948.4,312.4 948.6,311.4 948.8,310.3 949.0,309.3 949.2,308.3 949.4,307.3 949.6,306.3 949.8,305.3 950.0,304.4 950.1,303.4 950.3,302.5 950.5,301.6 950.7,300.7 950.8,299.8 951.0,298.9 951.1,298.1 951.3,297.3 951.4,296.5 951.5,295.7 951.7,294.5 951.9,293.4 952.0,292.3 952.2,291.2 952.3,290.2 952.4,289.2 952.6,288.3 952.7,287.3 952.8,286.4 952.9,285.5 953.0,284.5 953.1,283.6 953.2,282.7 953.3,281.7 953.4,280.8 953.5,279.8 953.6,278.8 953.8,277.8 953.9,276.8 954.0,275.8 954.1,274.8 954.2,273.8 954.3,272.8 954.5,271.8 954.6,270.8 954.7,269.8 954.8,268.8 954.9,267.8 955.1,266.8 955.2,265.8 955.3,264.8 955.4,263.8 955.5,262.8 955.7,261.8 955.8,260.7 955.9,259.7 956.0,258.7 956.2,257.7 956.3,256.7 956.4,255.7 956.6,254.7 956.7,253.7 956.8,252.8 956.9,251.8 957.1,250.8 957.2,249.8 957.3,248.8 957.4,247.8 957.5,246.8 957.6,245.8 957.8,244.8 957.9,243.8 958.0,242.8 958.1,241.8 958.2,240.8 958.3,239.8 958.4,238.8 958.5,237.8 958.6,236.8 958.7,235.8 958.8,234.8 958.9,233.9 958.9,232.9 959.0,231.9 959.0,230.9 959.1,229.9 959.1,229.0 959.1,228.0 959.1,227.0 959.1,226.0 959.1,225.0 959.1,224.0 959.1,223.0 959.1,222.3 958.8,221.0 958.7,219.7 958.5,218.5 958.3,217.3 958.1,216.1 957.8,215.0 957.4,213.8 956.9,212.6 956.4,211.4 955.9,210.3 955.3,209.1 954.6,207.9 953.9,206.8 953.1,205.6 952.2,204.4 951.3,203.3 950.3,202.1 949.3,201.0 948.2,199.8 947.0,198.7 945.8,197.6 944.5,196.4 943.2,195.3 941.8,194.2 940.4,193.1 938.9,192.0 937.3,191.0 935.7,189.9 934.1,188.8 932.3,187.8 930.6,186.8 928.8,185.8 926.9,184.8 925.0,183.8 923.0,182.8 921.0,181.8 918.9,180.9 916.8,180.0 914.6,179.1 912.4,178.2 910.1,177.3 907.9,176.4 905.5,175.6 903.1,174.8 900.7,174.0 898.2,173.2 895.7,172.4 893.2,171.7 890.6,171.0 888.0,170.3 885.3,169.6 882.7,168.9 880.0,168.3 877.2,167.6 874.4,167.0 871.6,166.5 868.8,165.9 865.9,165.4 863.0,164.9 860.1,164.4 857.2,163.9 854.2,163.5 851.2,163.1 848.2,162.7 845.2,162.3 842.2,162.0 839.1,161.6 836.0,161.3 833.0,161.1 829.9,160.8 826.7,160.6 823.6,160.4 820.5,160.2 817.4,160.1 814.2,160.0 811.1,159.9 807.9,159.8 804.7,159.7 801.6,159.7 798.4,159.7 795.3,159.7 792.1,159.8 788.9,159.9 785.8,160.0 782.6,160.1 779.5,160.2 776.4,160.4 773.3,160.6 770.1,160.8 767.0,161.1 764.0,161.3 760.9,161.6 757.8,162.0 754.8,162.3 751.8,162.7 748.8,163.1 745.8,163.5 742.8,163.9 739.9,164.4 737.0,164.9 734.1,165.4 731.2,165.9 728.4,166.5 725.6,167.0 722.8,167.6 720.0,168.3 717.3,168.9 714.7,169.6 712.0,170.3 709.4,171.0 706.8,171.7 704.3,172.4 701.8,173.2 699.3,174.0 696.9,174.8 694.5,175.6 692.1,176.4 689.9,177.3 687.6,178.2 685.4,179.1 683.2,180.0 681.1,180.9 679.0,181.8 677.0,182.8 675.0,183.8 673.1,184.8 671.2,185.8 669.4,186.8 667.7,187.8 665.9,188.8 664.3,189.9 662.7,191.0 661.1,192.0 659.6,193.1 658.2,194.2 656.8,195.3 655.5,196.4 654.2,197.6 653.0,198.7 651.8,199.8 650.7,201.0 649.7,202.1 648.7,203.3 647.8,204.4 646.9,205.6 646.1,206.8 645.4,207.9 644.7,209.1 644.1,210.3 643.6,211.4 643.1,212.6 642.6,213.8 642.2,215.0 641.9,216.1 641.7,217.3 641.5,218.5 641.3,219.7 641.2,221.0" fill="none" stroke="#ff8000" stroke-width="4.0" stroke-linejoin="round"/>
</svg><div class="btn" style="left:1144px;top:835px;width:60px;height:25px;line-height:22px;background:#333">应用</div>
<div class="btn" style="left:1210px;top:835px;width:60px;height:25px;line-height:22px;background:#404040">取消</div>
</div>
</body></html>
